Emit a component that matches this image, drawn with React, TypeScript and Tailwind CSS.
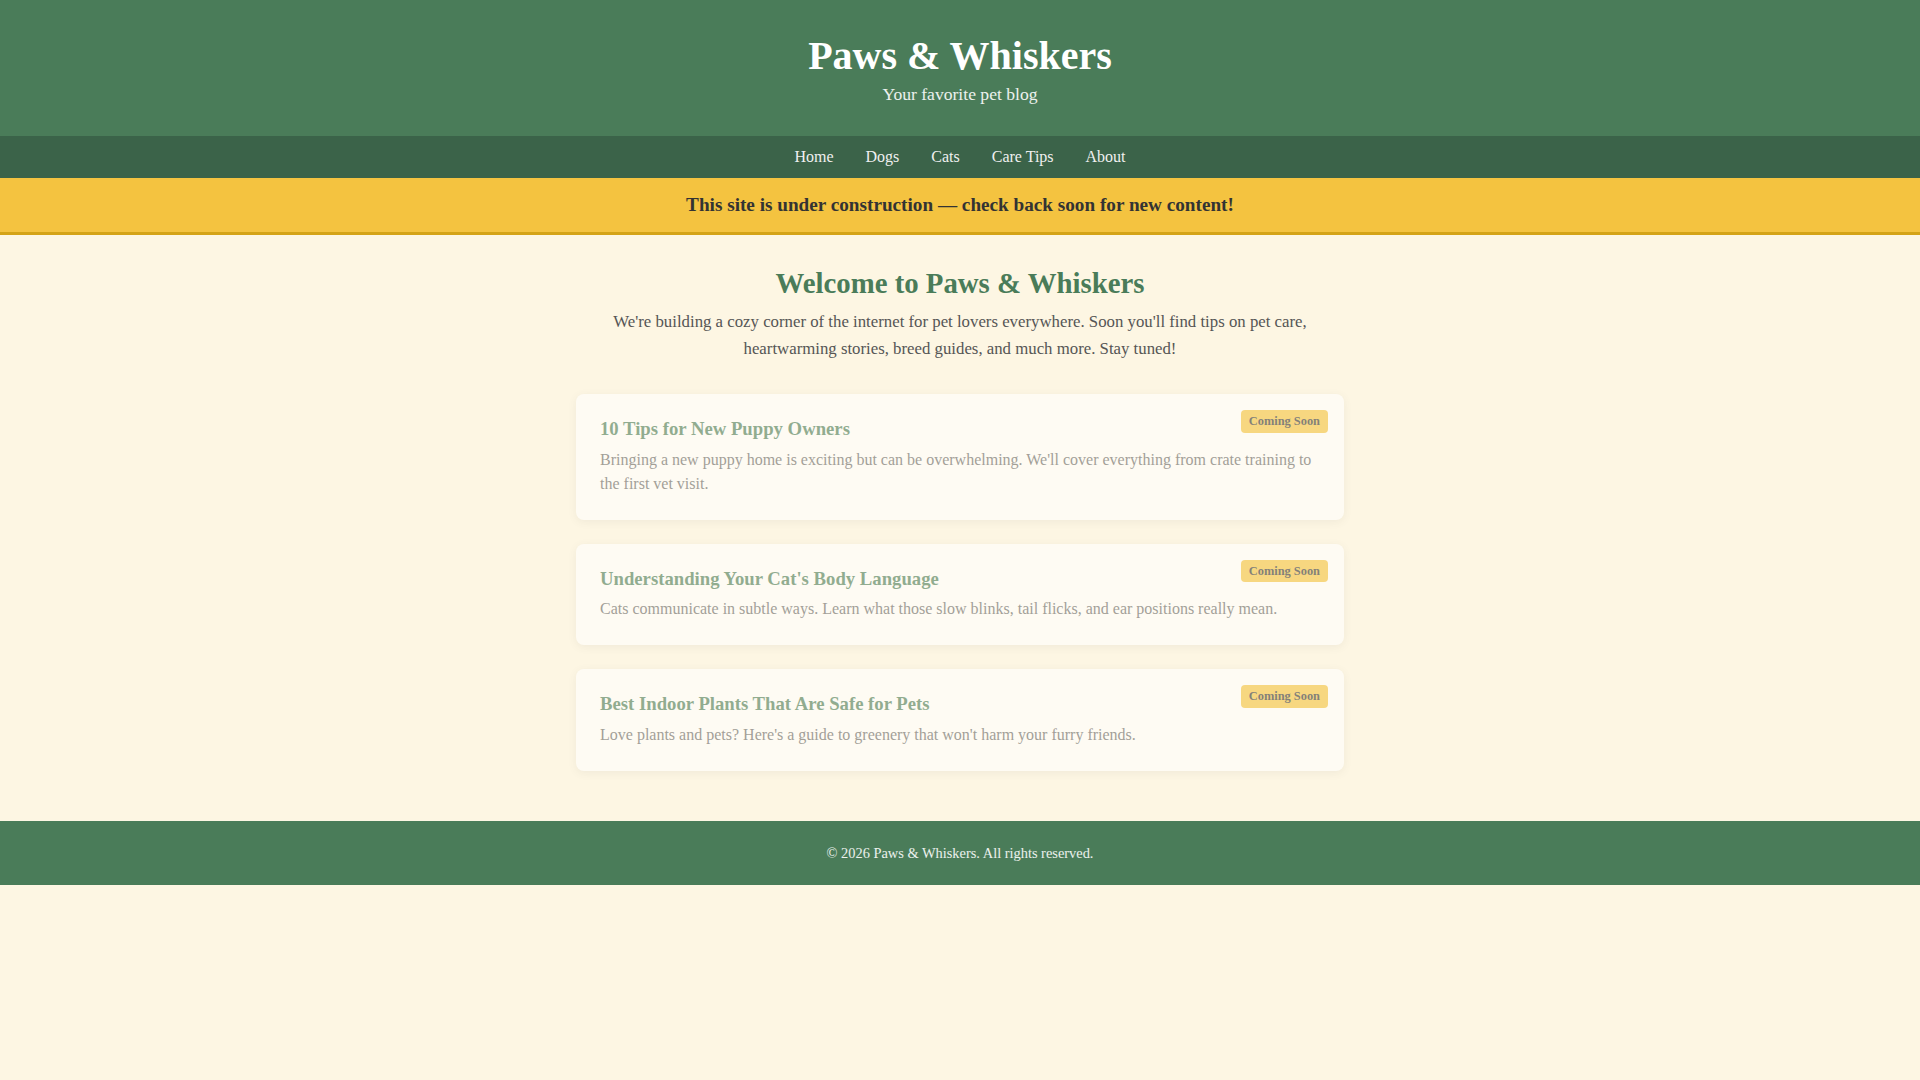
import React from "react";

const posts = [
  {
    title: "10 Tips for New Puppy Owners",
    body: "Bringing a new puppy home is exciting but can be overwhelming. We'll cover everything from crate training to the first vet visit.",
  },
  {
    title: "Understanding Your Cat's Body Language",
    body: "Cats communicate in subtle ways. Learn what those slow blinks, tail flicks, and ear positions really mean.",
  },
  {
    title: "Best Indoor Plants That Are Safe for Pets",
    body: "Love plants and pets? Here's a guide to greenery that won't harm your furry friends.",
  },
];

const navItems = ["Home", "Dogs", "Cats", "Care Tips", "About"];

export default function App() {
  return (
    <div className="min-h-screen bg-[#fdf6e3] font-['Liberation_Serif',serif] text-[#333]">
      <header className="bg-[#4a7c59] pt-[33px] pb-8 text-center text-white">
        <h1 className="text-[40px] font-bold leading-[46px]">Paws &amp; Whiskers</h1>
        <p className="mt-[5px] text-[17.6px] leading-[20px] text-white/90">Your favorite pet blog</p>
      </header>
      <nav className="flex justify-center gap-8 bg-[#3b6349] py-3 text-[16px] leading-[18px] text-[#f0f0f0]">
        {navItems.map((n) => (
          <a key={n} href="#" className="text-[#f0f0f0]">
            {n}
          </a>
        ))}
      </nav>
      <div className="border-b-[3px] border-[#d4a317] bg-[#f4c340] py-4 text-center text-[19.2px] font-bold leading-[22px] text-[#333]">
        This site is under construction — check back soon for new content!
      </div>
      <main className="mx-auto max-w-[800px] px-4 pt-8 pb-[50px]">
        <h2 className="text-center text-[28.8px] font-bold leading-[33px] text-[#4a7c59]">
          Welcome to Paws &amp; Whiskers
        </h2>
        <p className="mx-auto mt-2 max-w-[700px] text-center text-[16.8px] leading-[27px] text-[#555]">
          We're building a cozy corner of the internet for pet lovers everywhere. Soon you'll find tips on pet care,
          heartwarming stories, breed guides, and much more. Stay tuned!
        </p>
        <div className="mt-8 flex flex-col gap-6">
          {posts.map((p) => (
            <article
              key={p.title}
              className="relative rounded-lg bg-white p-6 opacity-60 shadow-[0_2px_8px_rgba(0,0,0,0.08)]"
            >
              <span className="absolute right-4 top-4 rounded-[4px] bg-[#f4c340] px-2 py-1 text-[12.4px] font-bold leading-[14.7px] text-[#333]">
                Coming Soon
              </span>
              <h3 className="text-[18.72px] font-bold leading-[21.5px] text-[#4a7c59]">{p.title}</h3>
              <p className="mt-2 text-[16px] leading-[24px] text-[#666]">{p.body}</p>
            </article>
          ))}
        </div>
      </main>
      <footer className="bg-[#4a7c59] py-6 text-center text-[14.4px] leading-[16.5px] text-white/90">
        © 2026 Paws &amp; Whiskers. All rights reserved.
      </footer>
    </div>
  );
}
